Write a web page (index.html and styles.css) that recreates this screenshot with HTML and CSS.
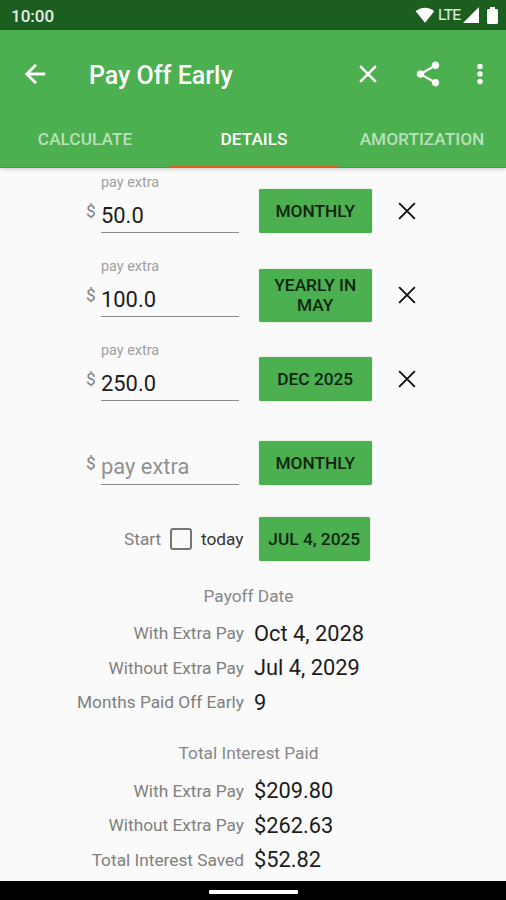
FILE: index.html
```html
<!DOCTYPE html>
<html lang="en">
<head>
<meta charset="utf-8">
<title>Pay Off Early</title>
<link rel="stylesheet" href="styles.css">
</head>
<body>
<div class="status">
  <span class="clock">10:00</span>
  <svg class="wifi" width="20" height="16" viewBox="0 0 20 16"><path d="M.7 4.3C5.5-.6 14.5-.6 19.3 4.3L10 15.7z" fill="#fff"/></svg>
  <span class="lte">LTE</span>
  <svg class="signal" width="16" height="16" viewBox="0 0 16 16"><path d="M16 0v16H0z" fill="#fff"/></svg>
  <svg class="battery" width="11" height="17" viewBox="0 0 11 17"><path d="M3 0h5v2h1.500Q11 2 11 3.500v12Q11 17 9.500 17h-8Q0 17 0 15.500v-12Q0 2 1.500 2H3z" fill="#fff"/></svg>
</div>
<header class="appbar">
  <div class="toolbar">
    <svg class="back" width="30" height="30" viewBox="0 0 24 24"><path d="M20 11H7.830l5.590-5.590L12 4l-8 8 8 8 1.410-1.410L7.830 13H20z" fill="#fff" stroke="#fff" stroke-width=".3"/></svg>
    <h1 class="title">Pay Off Early</h1>
    <svg class="close" width="30" height="30" viewBox="0 0 24 24"><path d="M19 6.410L17.590 5 12 10.590 6.410 5 5 6.410 10.590 12 5 17.590 6.410 19 12 13.410 17.590 19 19 17.590 13.410 12z" fill="#fff"/></svg>
    <svg class="share" width="30" height="30" viewBox="0 0 24 24"><path d="M18 16.080c-.76 0-1.440.3-1.960.77L8.910 12.700c.05-.23.09-.46.09-.7s-.04-.47-.09-.7l7.050-4.110c.54.5 1.250.81 2.040.81 1.660 0 3-1.340 3-3s-1.340-3-3-3-3 1.340-3 3c0 .24.04.47.09.7L8.040 9.810C7.500 9.310 6.790 9 6 9c-1.660 0-3 1.340-3 3s1.340 3 3 3c.79 0 1.500-.31 2.040-.81l7.120 4.160c-.05.21-.08.43-.08.65 0 1.610 1.310 2.920 2.920 2.920s2.920-1.310 2.920-2.920-1.310-2.920-2.920-2.920z" fill="#fff"/></svg>
    <svg class="more" width="30" height="30" viewBox="0 0 24 24"><g fill="#fff"><circle cx="12" cy="6" r="2.200"/><circle cx="12" cy="12" r="2.200"/><circle cx="12" cy="18" r="2.200"/></g></svg>
  </div>
  <nav class="tabs">
    <span class="tab">CALCULATE</span>
    <span class="tab active">DETAILS</span>
    <span class="tab">AMORTIZATION</span>
  </nav>
</header>
<main class="content">
  <div class="row">
    <span class="dollar">$</span>
    <div class="field"><span class="hint">pay extra</span><span class="value">50.0</span></div>
    <span class="btn">MONTHLY</span>
    <svg class="remove" width="30" height="30" viewBox="0 0 24 24"><path d="M5.700 5.700l12.600 12.600M18.300 5.700L5.700 18.300"/></svg>
  </div>
  <div class="row">
    <span class="dollar">$</span>
    <div class="field"><span class="hint">pay extra</span><span class="value">100.0</span></div>
    <span class="btn">YEARLY IN<br>MAY</span>
    <svg class="remove" width="30" height="30" viewBox="0 0 24 24"><path d="M5.700 5.700l12.600 12.600M18.300 5.700L5.700 18.300"/></svg>
  </div>
  <div class="row">
    <span class="dollar">$</span>
    <div class="field"><span class="hint">pay extra</span><span class="value">250.0</span></div>
    <span class="btn">DEC 2025</span>
    <svg class="remove" width="30" height="30" viewBox="0 0 24 24"><path d="M5.700 5.700l12.600 12.600M18.300 5.700L5.700 18.300"/></svg>
  </div>
  <div class="row">
    <span class="dollar">$</span>
    <div class="field"><span class="value placeholder">pay extra</span></div>
    <span class="btn">MONTHLY</span>
  </div>
  <div class="start">
    <span class="start-label">Start</span>
    <span class="checkbox"></span>
    <span class="today">today</span>
    <span class="btn date">JUL 4, 2025</span>
  </div>
  <section class="summary">
    <h2>Payoff Date</h2>
    <dl>
      <dt>With Extra Pay</dt><dd>Oct 4, 2028</dd>
      <dt>Without Extra Pay</dt><dd>Jul 4, 2029</dd>
      <dt>Months Paid Off Early</dt><dd>9</dd>
    </dl>
  </section>
  <section class="summary">
    <h2>Total Interest Paid</h2>
    <dl>
      <dt>With Extra Pay</dt><dd>$209.80</dd>
      <dt>Without Extra Pay</dt><dd>$262.63</dd>
      <dt>Total Interest Saved</dt><dd>$52.82</dd>
    </dl>
  </section>
</main>
<footer class="navbar"><span class="pill"></span></footer>
</body>
</html>
```
FILE: styles.css
```css
* { box-sizing: border-box; }
body {
  margin: 0;
  height: 900px;
  display: flex;
  flex-direction: column;
  overflow: hidden;
  background: #fafafa;
  font-family: Roboto, sans-serif;
  color: #1c1c1c;
}
svg { display: block; flex: none; }
.status {
  height: 30px;
  flex: none;
  display: flex;
  align-items: center;
  padding: 0 8px 0 11px;
  background: #1b5e20;
  color: #fff;
}
.clock { flex: 1; padding-top: 1px; font-size: 17px; font-weight: 500; color: #e4efe4; }
.wifi { margin-right: 3px; }
.lte { width: 25px; font-size: 15.5px; letter-spacing: -0.6px; color: #dce8dc; -webkit-text-stroke: 0.2px #dce8dc; }
.signal { margin-right: 8px; }
.appbar {
  height: 138px;
  flex: none;
  background: #4caf50;
  color: #fff;
  border-bottom: 1px solid #43a047;
  box-shadow: 0 1px 4px rgba(0, 0, 0, 0.22);
  z-index: 1;
}
.toolbar {
  height: 88px;
  display: flex;
  align-items: center;
  padding: 0 11px 0 20px;
}
.title {
  flex: 1;
  margin: 3px 0 0 39px;
  font-size: 25px;
  font-weight: 500;
  line-height: 30px;
}
.share { margin-left: 30px; }
.more { margin-left: 22px; }
.tabs { height: 49px; display: grid; grid-template-columns: 170px 168px 168px; }
.tab {
  display: flex;
  align-items: center;
  justify-content: center;
  padding-bottom: 6px;
  border-bottom: 2px solid transparent;
  font-size: 17.3px;
  font-weight: 500;
  color: #b9e0ba;
}
.tab.active { color: #fff; border-color: #e8681c; }
.content { flex: 1; padding-top: 1px; }
.row { height: 84px; display: flex; align-items: center; padding-left: 86px; }
.dollar { width: 15px; font-size: 17.3px; color: #808080; }
.field {
  width: 138px;
  height: 64px;
  margin: -21px 19.5px 0 0;
  display: flex;
  flex-direction: column;
  justify-content: flex-end;
  border-bottom: 1px solid #8c8c8c;
}
.hint { font-size: 14.4px; line-height: 18px; color: #a0a0a0; }
.value { font-size: 21.9px; line-height: 30px; padding-top: 9px; height: 40px; }
.placeholder { padding-top: 8px; color: #929292; }
.btn {
  width: 113.5px;
  min-height: 44px;
  padding: 6px 0;
  display: flex;
  align-items: center;
  justify-content: center;
  text-align: center;
  border-radius: 2px;
  background: #4caf50;
  box-shadow: 0 0 1px #4caf50;
  font-size: 17.3px;
  line-height: 20.5px;
  font-weight: 500;
  color: #0f2610;
}
.remove { margin-left: 20px; fill: none; stroke: #111; stroke-width: 1.5; }
.start { height: 68px; display: flex; align-items: center; padding-left: 124px; font-size: 17.3px; }
.start-label { width: 46px; color: #808080; }
.checkbox { width: 22px; height: 22px; border: 2px solid #757575; border-radius: 3px; }
.today { width: 66.5px; padding-left: 9px; color: #333; }
.date { width: 111.5px; }
.summary h2 {
  margin: 0;
  padding-right: 9px;
  height: 43px;
  font-size: 17.3px;
  font-weight: 400;
  line-height: 46px;
  text-align: center;
  color: #888;
}
.summary dl {
  margin: 0;
  display: grid;
  grid-template-columns: 244px 1fr;
  column-gap: 10px;
  grid-auto-rows: 34.6px;
  align-items: center;
}
.summary + .summary { margin-top: 10.6px; }
dt { text-align: right; font-size: 17.3px; color: #808080; }
dd { margin: 0; font-size: 21.8px; }
.navbar {
  height: 19px;
  flex: none;
  display: flex;
  justify-content: center;
  align-items: center;
  padding-top: 2px;
  background: #000;
}
.pill { width: 89px; height: 4px; border-radius: 1px; background: #fff; }
```
